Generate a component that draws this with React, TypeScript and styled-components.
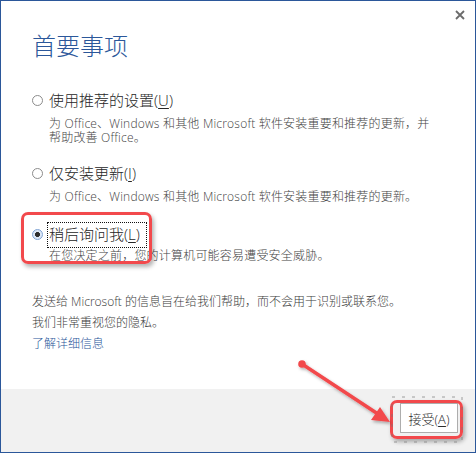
import styled, { createGlobalStyle } from 'styled-components';

const GlobalStyle = createGlobalStyle`
  html, body {
    margin: 0;
    padding: 0;
    background: #ffffff;
  }
  body {
    font-family: "Open Sans", "Noto Sans CJK SC", sans-serif;
  }
`;

const Window = styled.div`
  position: relative;
  width: 476px;
  height: 453px;
  box-sizing: border-box;
  border: 1px solid #2b579a;
  background: #ffffff;
  display: flex;
  flex-direction: column;
  overflow: hidden;
`;

const TopBar = styled.div`
  display: flex;
  justify-content: flex-end;
  height: 27px;
  box-sizing: border-box;
  padding: 9px 10px 0 0;
`;

const CloseButton = styled.button`
  width: 10px;
  height: 10px;
  padding: 0;
  border: none;
  background: none;
  display: flex;
  cursor: pointer;
`;

const Content = styled.div`
  flex: 1;
  padding: 1px 0 0 31px;
  font-family: "Open Sans", "Noto Sans CJK SC", sans-serif;
`;

const Title = styled.h1`
  margin: 0;
  font-size: 24px;
  font-weight: 300;
  line-height: 32px;
  color: #2b579a;
  font-family: "Noto Sans CJK SC", sans-serif;
`;

const Option = styled.div<{ $top: number }>`
  margin-top: ${(p) => p.$top}px;
`;

const OptionRow = styled.div`
  display: flex;
  align-items: center;
  gap: 6px;
`;

const Radio = styled.span<{ $checked?: boolean }>`
  width: 11px;
  height: 11px;
  box-sizing: border-box;
  border-radius: 50%;
  border: 1px solid ${(p) => (p.$checked ? '#7fa3d4' : '#8c8c8c')};
  background: ${(p) => (p.$checked ? 'radial-gradient(circle, #2c2c2c 0 2.2px, #dbe6f5 2.8px)' : '#ffffff')};
  flex-shrink: 0;
`;

const Label = styled.span<{ $focused?: boolean }>`
  font-size: 15px;
  font-weight: 300;
  line-height: 20px;
  color: #262626;
  font-family: "Open Sans", "Noto Sans CJK SC", sans-serif;
  ${(p) =>
    p.$focused &&
    `
    outline: 1px dotted #111;
    outline-offset: 1px;
    padding: 0 5px 2px 0;
    margin-bottom: -2px;
  `}
`;

const Key = styled.span`
  text-decoration: underline;
  text-underline-offset: 2px;
`;

const Description = styled.p<{ $gap: number }>`
  margin: ${(p) => p.$gap}px 0 0 17px;
  width: 384px;
  font-size: 12px;
  font-weight: 300;
  line-height: 14px;
  letter-spacing: 0.2px;
  color: #444444;
`;

const Notes = styled.div`
  margin-top: 28px;
  font-size: 12px;
  font-weight: 300;
  line-height: 21px;
  color: #3c3c3c;
`;

const NoteLine = styled.p`
  margin: 0;
`;

const LearnMore = styled.a`
  color: #2b579a;
  text-decoration: none;
  cursor: pointer;
`;

const Footer = styled.div`
  height: 63px;
  box-sizing: border-box;
  background: #f1f1f1;
  display: flex;
  justify-content: flex-end;
  align-items: flex-start;
  padding: 14px 17px 0 0;
`;

const AcceptButton = styled.button`
  width: 58px;
  height: 30px;
  box-sizing: border-box;
  border: 1px solid #adadad;
  background: #ffffff;
  color: #2b2b2b;
  font-size: 13px;
  font-weight: 300;
  font-family: "Open Sans", "Noto Sans CJK SC", sans-serif;
  padding: 0;
  cursor: pointer;
`;

const Highlight = styled.div<{ $left: number; $top: number; $w: number; $h: number }>`
  position: absolute;
  left: ${(p) => p.$left}px;
  top: ${(p) => p.$top}px;
  width: ${(p) => p.$w}px;
  height: ${(p) => p.$h}px;
  box-sizing: border-box;
  border: 3px solid #f2494c;
  border-radius: 7px;
  box-shadow: 2px 3px 4px rgba(0, 0, 0, 0.3);
  pointer-events: none;
`;

const Overlay = styled.svg`
  position: absolute;
  left: 0;
  top: 0;
  pointer-events: none;
`;

function CloseIcon() {
  return (
    <svg width="10" height="10" viewBox="0 0 10 10">
      <path d="M1 1 L9 9 M9 1 L1 9" stroke="#6b6b6b" strokeWidth="1.8" />
    </svg>
  );
}

function Arrow() {
  return (
    <Overlay width="476" height="453" viewBox="0 0 476 453">
      <defs>
        <filter id="sh" x="-20%" y="-20%" width="140%" height="140%">
          <feDropShadow dx="1.5" dy="2" stdDeviation="1.5" floodColor="#000" floodOpacity="0.3" />
        </filter>
      </defs>
      <rect x="391" y="396" width="70" height="45" fill="none" stroke="#777" strokeWidth="1" strokeDasharray="3 7" opacity="0.7" />
      <g filter="url(#sh)">
        <circle cx="301" cy="363" r="3.8" fill="#f2494c" />
        <line x1="301" y1="363" x2="377" y2="413" stroke="#f2494c" strokeWidth="3.5" strokeLinecap="round" />
        <path d="M389 421 L370 419 L379 406 Z" fill="#f2494c" />
      </g>
    </Overlay>
  );
}

export default function App() {
  return (
    <>
      <GlobalStyle />
      <Window>
        <TopBar>
          <CloseButton aria-label="关闭">
            <CloseIcon />
          </CloseButton>
        </TopBar>
        <Content>
          <Title>首要事项</Title>

          <Option $top={29}>
            <OptionRow>
              <Radio />
              <Label>
                使用推荐的设置(<Key>U</Key>)
              </Label>
            </OptionRow>
            <Description $gap={7}>
              为 Office、Windows 和其他 Microsoft 软件安装重要和推荐的更新，并帮助改善 Office。
            </Description>
          </Option>

          <Option $top={18}>
            <OptionRow>
              <Radio />
              <Label>
                仅安装更新(<Key>I</Key>)
              </Label>
            </OptionRow>
            <Description $gap={7}>为 Office、Windows 和其他 Microsoft 软件安装重要和推荐的更新。</Description>
          </Option>

          <Option $top={20}>
            <OptionRow>
              <Radio $checked />
              <Label $focused>
                稍后询问我(<Key>L</Key>)
              </Label>
            </OptionRow>
            <Description $gap={5}>在您决定之前，您的计算机可能容易遭受安全威胁。</Description>
          </Option>

          <Notes>
            <NoteLine>发送给 Microsoft 的信息旨在给我们帮助，而不会用于识别或联系您。</NoteLine>
            <NoteLine>我们非常重视您的隐私。</NoteLine>
            <LearnMore>了解详细信息</LearnMore>
          </Notes>
        </Content>
        <Footer>
          <AcceptButton>
            接受(<Key>A</Key>)
          </AcceptButton>
        </Footer>

        <Highlight $left={20} $top={211} $w={131} $h={52} />
        <Highlight $left={389} $top={399} $w={73} $h={39} />
        <Arrow />
      </Window>
    </>
  );
}
